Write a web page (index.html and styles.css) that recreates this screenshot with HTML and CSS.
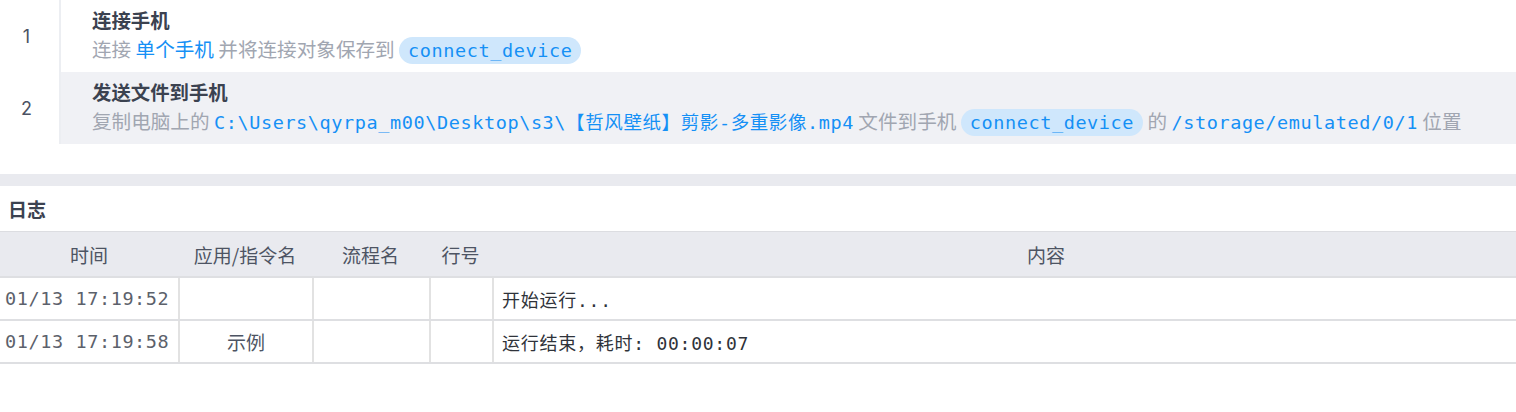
FILE: index.html
```html
<!DOCTYPE html>
<html lang="zh-CN">
<head>
<meta charset="utf-8">
<title>流程</title>
<link rel="stylesheet" href="styles.css">
</head>
<body>
<div class="steps">
  <div class="step">
    <div class="num">1</div>
    <div class="body">
      <div class="title">连接手机</div>
      <div class="desc">连接 <span class="hl">单个手机</span> 并将连接对象保存到 <span class="pill">connect_device</span></div>
    </div>
  </div>
  <div class="step alt">
    <div class="num">2</div>
    <div class="body">
      <div class="title">发送文件到手机</div>
      <div class="desc">复制电脑上的 <span class="code">C:\Users\qyrpa_m00\Desktop\s3\【哲风壁纸】剪影-多重影像.mp4</span> 文件到手机 <span class="pill">connect_device</span> 的 <span class="code">/storage/emulated/0/1</span> 位置</div>
    </div>
  </div>
</div>
<div class="band"></div>
<div class="log">
  <div class="log-title">日志</div>
  <div class="grid">
    <div class="row head">
      <div class="cell">时间</div>
      <div class="cell">应用/指令名</div>
      <div class="cell">流程名</div>
      <div class="cell">行号</div>
      <div class="cell">内容</div>
    </div>
    <div class="row">
      <div class="cell time">01/13 17:19:52</div>
      <div class="cell mid"></div>
      <div class="cell mid"></div>
      <div class="cell mid"></div>
      <div class="cell text">开始运行...</div>
    </div>
    <div class="row">
      <div class="cell time">01/13 17:19:58</div>
      <div class="cell mid">示例</div>
      <div class="cell mid"></div>
      <div class="cell mid"></div>
      <div class="cell text">运行结束，耗时: 00:00:07</div>
    </div>
  </div>
</div>
</body>
</html>
```
FILE: styles.css
```css
* { box-sizing: border-box; }
html, body { margin: 0; padding: 0; background: #ffffff; }
body {
  font-family: "Noto Sans CJK SC", "Noto Sans", sans-serif;
  width: 1516px;
  overflow: hidden;
}

.steps { padding-bottom: 30px; }

.step {
  display: flex;
  height: 72px;
}
.num {
  width: 61px;
  flex: none;
  border-right: 2px solid #eceef2;
  display: flex;
  align-items: center;
  justify-content: center;
  padding-right: 6px;
  font-family: "Inter", "Noto Sans", sans-serif;
  font-size: 18px;
  color: #4b5263;
  background: #ffffff;
}
.body {
  flex: 1;
  padding: 7px 0 0 31px;
}
.step.alt .body { background: #f0f1f5; }
.title {
  font-size: 19.4px;
  font-weight: 700;
  line-height: 26px;
  color: #3b4250;
}
.desc {
  font-size: 19.6px;
  line-height: 32px;
  color: #a1a6b1;
  white-space: nowrap;
}
.hl { color: #1590f5; }
.code {
  color: #1590f5;
  font-family: "DejaVu Sans Mono", "Noto Sans CJK SC", monospace;
  font-size: 18.5px;
  letter-spacing: 0.6px;
}
.pill {
  display: inline-block;
  font-family: "DejaVu Sans Mono", "Noto Sans CJK SC", monospace;
  font-size: 18.5px;
  letter-spacing: 0.6px;
  color: #1590f5;
  background: #cfe7fc;
  border-radius: 14px;
  padding: 0 9px;
  line-height: 27px;
}

.band { height: 12px; background: #e9eaef; }

.log-title {
  height: 45px;
  display: flex;
  align-items: center;
  padding-left: 8px;
  font-size: 19px;
  font-weight: 700;
  color: #3b4250;
}

.grid { width: 1600px; }
.row {
  display: grid;
  grid-template-columns: 178px 134px 117px 63px 1108px;
  border-bottom: 2px solid #dedfe2;
  height: 43px;
}
.row.head {
  background: #e9eaef;
  border-top: 1px solid #dcdde1;
  height: 47px;
}
.cell {
  display: flex;
  align-items: center;
  font-size: 19px;
  color: #333740;
  white-space: nowrap;
}
.head .cell {
  justify-content: center;
  color: #4d5463;
}
.row:not(.head) .cell + .cell { border-left: 2px solid #e2e2e2; }
.time {
  padding-left: 5px;
  font-family: "DejaVu Sans Mono", monospace;
  font-size: 18.5px;
  letter-spacing: 0.6px;
  color: #5c616b;
}
.mid { justify-content: center; color: #4d5463; }
.text {
  padding-left: 8px;
  color: #2f333a;
  font-family: "DejaVu Sans Mono", "Noto Sans CJK SC", monospace;
  font-size: 18px;
  letter-spacing: 0.75px;
}
```
